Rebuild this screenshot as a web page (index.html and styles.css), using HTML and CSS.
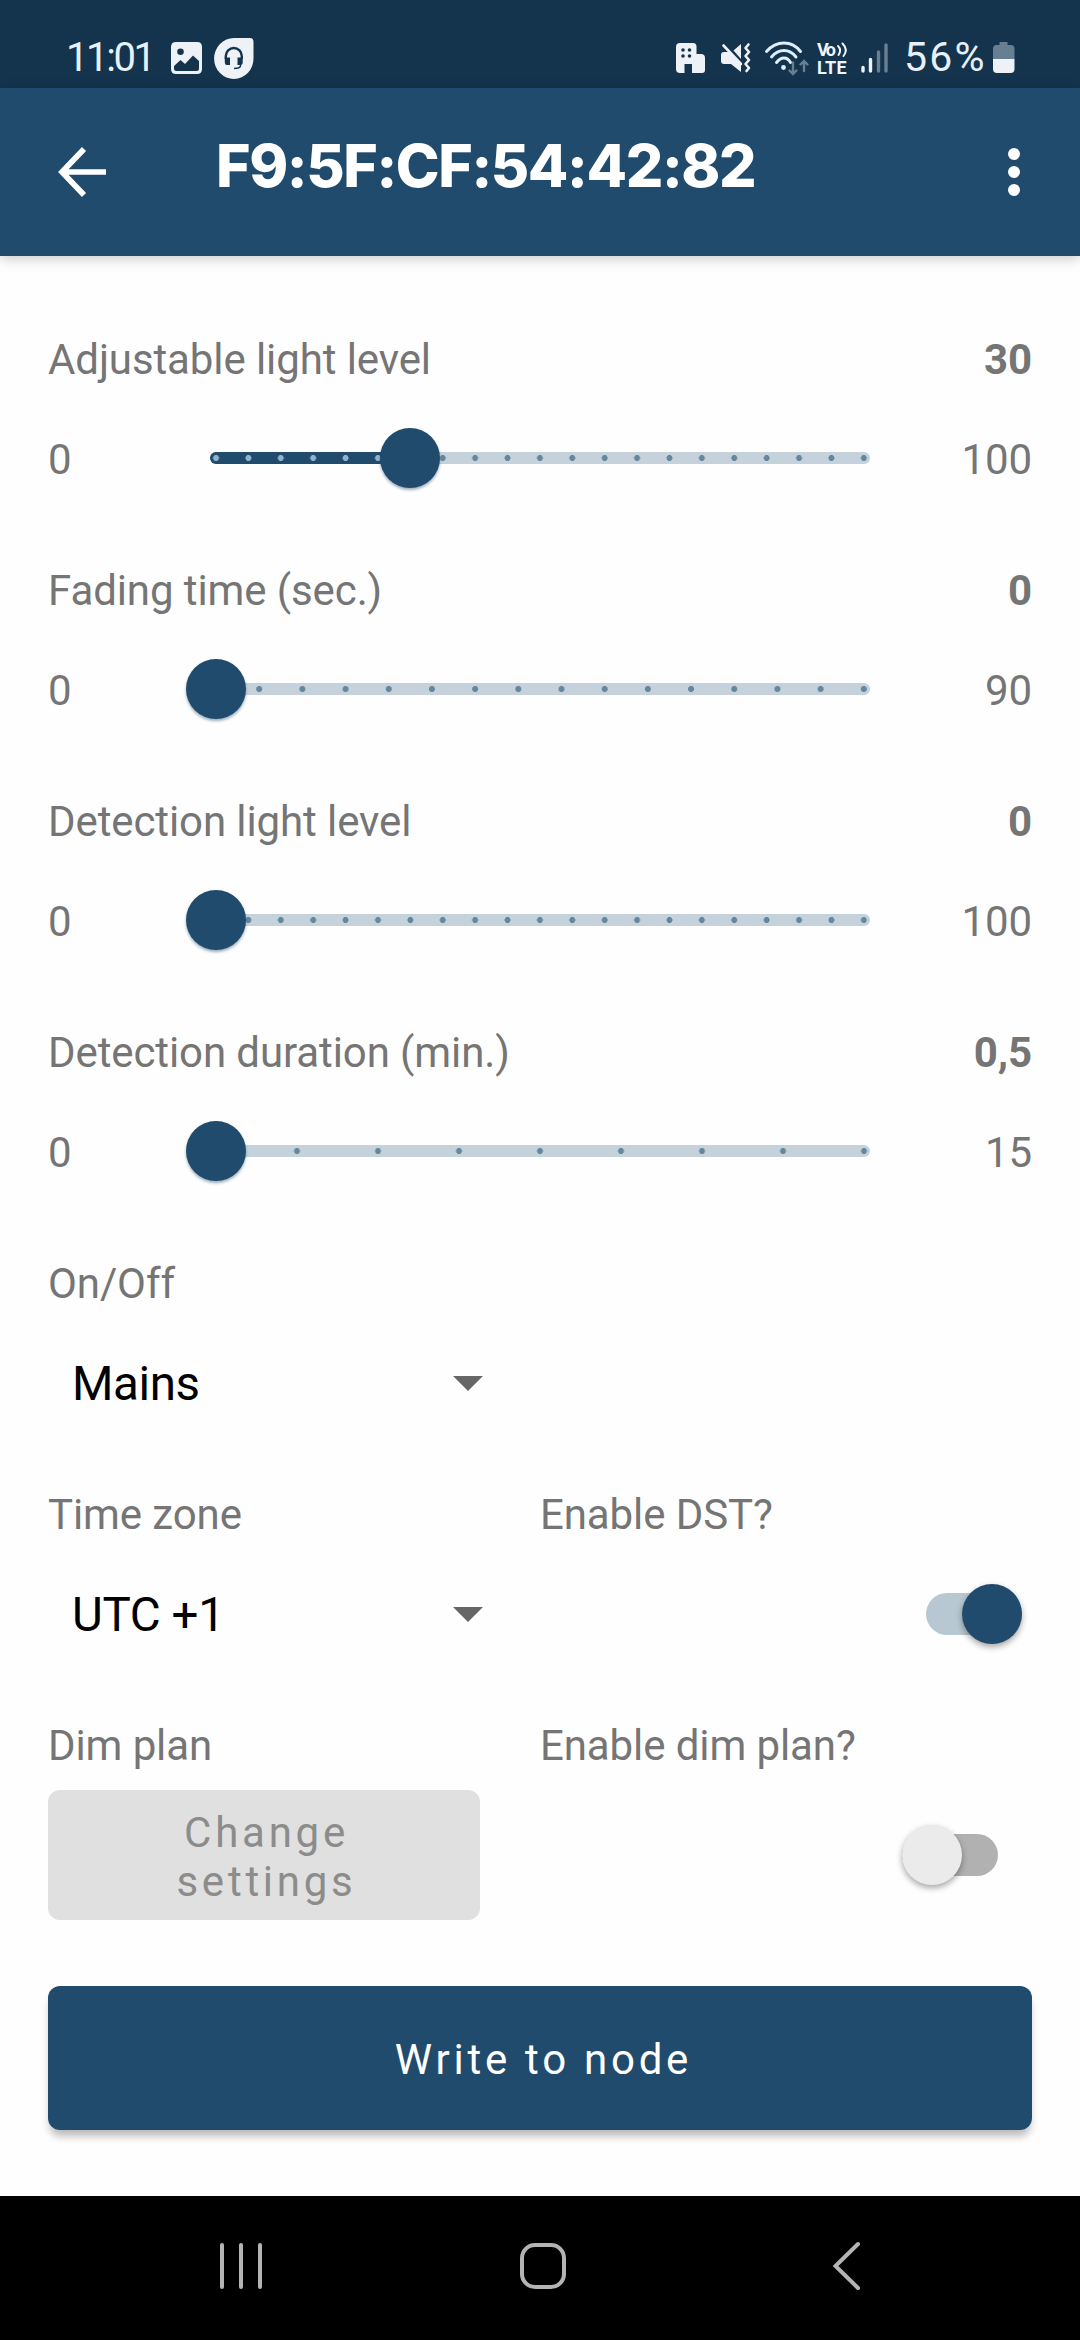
FILE: index.html
```html
<!DOCTYPE html>
<html lang="en">
<head>
  <meta charset="UTF-8" />
  <title>Node settings</title>
  <link rel="stylesheet" href="styles.css">
</head>
<body>

<div class="status-bar">
  <span class="clock">11:01</span>
  <svg class="icon-picture" width="31" height="32" viewBox="0 0 31 32">
    <path fill="#eef2f6" fill-rule="evenodd" d="M5 0H26Q31 0 31 5V27Q31 32 26 32H5Q0 32 0 27V5Q0 0 5 0ZM9.500 6.500A3.300 3.300 0 1 0 9.500 13.100A3.300 3.300 0 1 0 9.500 6.500ZM3 24V26.500Q3 29 5.500 29H25.500Q28 29 28 26.500V19L22 13.500L14 22L9.500 18Z"/>
  </svg>
  <svg class="icon-headset" width="40" height="42" viewBox="0 0 40 42">
    <path fill="#eef2f6" d="M20 1H36Q39.500 1 39.500 5V21A19.700 20.500 0 1 1 20 1Z"/>
    <path fill="none" stroke="#14344d" stroke-width="2.400" d="M11.800 22V19A8 8 0 0 1 27.800 19V22"/>
    <path fill="#14344d" d="M10.800 20.500H16V28H13Q10.800 28 10.800 25.500ZM23.500 20.500H28.700V25.500Q28.700 28 26 28H23.500Z"/>
    <path fill="none" stroke="#14344d" stroke-width="1.400" d="M26.500 27V29Q26 31.500 20 31.500"/>
  </svg>

  <div class="status-right">
    <svg class="icon-building" width="30" height="32" viewBox="0 0 30 32">
      <path fill="#eef2f6" d="M4 1H17Q20.500 1 20.500 4.500V12H25Q29 12 29 16V28Q29 31 26 31H16V22H8.500V31H4Q0 31 0 27V5Q0 1 4 1Z"/>
      <g fill="#14344d">
        <circle cx="7" cy="8" r="1.800"/><circle cx="13.500" cy="8" r="1.800"/>
        <circle cx="7" cy="14" r="1.800"/><circle cx="13.500" cy="14" r="1.800"/>
      </g>
    </svg>
    <svg class="icon-mute" width="31" height="32" viewBox="0 0 31 32">
      <path fill="#eef2f6" d="M3 10H8L20 22V30L10 22H3Q0 22 0 19V13Q0 10 3 10ZM20 2V17L12.500 8.500Z"/>
      <path fill="none" stroke="#eef2f6" stroke-width="2.600" stroke-linecap="round" d="M2.500 3.500L20 22"/>
      <path fill="none" stroke="#eef2f6" stroke-width="2.600" stroke-linecap="round" stroke-linejoin="round" d="M27.500 2.500L24.500 6L28 10L24.500 14L28 18L24.500 22L28 26L25.500 29"/>
    </svg>
    <svg class="icon-wifi" width="44" height="36" viewBox="0 0 44 36">
      <g fill="none" stroke="#dfeefa" stroke-width="2.900" stroke-linecap="round">
        <path d="M1.500 11.500Q9 3 19 3T35.500 11.500"/>
        <path d="M6.500 17Q12 10.500 19 10.500T31 17"/>
        <path d="M11.500 22.500Q15 18 19 18T25.500 22.500"/>
      </g>
      <circle cx="18.500" cy="27.500" r="2.400" fill="#dfeefa"/>
      <path fill="none" stroke="#687f92" stroke-width="2.400" stroke-linecap="round" d="M28 22.500V34M24.500 30.500L28 34L31.500 30.500M39 31V21M35.500 24.500L39 21L42.500 24.500"/>
    </svg>
    <svg class="icon-volte" width="32" height="34" viewBox="0 0 32 34">
      <text class="volte" x="0" y="15" textLength="19">Vo</text>
      <text class="volte" x="0" y="32.500" textLength="29.500">LTE</text>
      <path fill="none" stroke="#eef6fc" stroke-width="2" stroke-linecap="round" d="M21 5Q25 9 21.500 14M25.500 2.500Q31.500 8.500 26.500 15"/>
    </svg>
    <svg class="icon-signal" width="28" height="32" viewBox="0 0 28 32">
      <g stroke-width="3.400" stroke-linecap="round">
        <path stroke="#eef2f6" d="M2 25.500V29M9.500 17.500V29"/>
        <path stroke="#687f92" d="M17.500 10V29M25 3V29"/>
      </g>
    </svg>
    <span class="battery-text">56%</span>
    <svg class="icon-battery" width="22" height="32" viewBox="0 0 22 32">
      <path fill="#687f92" d="M6.500 0H14.500V3H18Q21.500 3 21.500 7V17H0V7Q0 3 3.500 3H6.500Z"/>
      <path fill="#eef2f6" d="M0 17H21.500V27Q21.500 31 17.500 31H4Q0 31 0 27Z"/>
    </svg>
  </div>
</div>

<div class="app-bar">
  <svg class="icon-back" width="48" height="50" viewBox="0 0 48 50">
    <path fill="none" stroke="#fff" stroke-width="5.700" d="M48 25H4M26 2L4 25L26 48"/>
  </svg>
  <h1>F9:5F:CF:54:42:82</h1>
  <svg class="icon-more" width="12" height="48" viewBox="0 0 12 48">
    <g fill="#fff"><circle cx="6" cy="6" r="6"/><circle cx="6" cy="24" r="6"/><circle cx="6" cy="42" r="6"/></g>
  </svg>
</div>

<div class="content">
  <div class="setting">
    <div class="label-row"><span>Adjustable light level</span><strong>30</strong></div>
    <div class="slider-row">
      <span>0</span>
      <div class="slider" style="--step: 32.4px; --pos: 194.4px">
        <div class="fill"></div>
        <div class="thumb"></div>
      </div>
      <span class="max">100</span>
    </div>
  </div>

  <div class="setting">
    <div class="label-row"><span>Fading time (sec.)</span><strong>0</strong></div>
    <div class="slider-row">
      <span>0</span>
      <div class="slider" style="--step: 43.2px; --pos: 0px">
        <div class="thumb"></div>
      </div>
      <span class="max">90</span>
    </div>
  </div>

  <div class="setting">
    <div class="label-row"><span>Detection light level</span><strong>0</strong></div>
    <div class="slider-row">
      <span>0</span>
      <div class="slider" style="--step: 32.4px; --pos: 0px">
        <div class="thumb"></div>
      </div>
      <span class="max">100</span>
    </div>
  </div>

  <div class="setting">
    <div class="label-row"><span>Detection duration (min.)</span><strong>0,5</strong></div>
    <div class="slider-row">
      <span>0</span>
      <div class="slider" style="--step: 81px; --pos: 0px">
        <div class="thumb"></div>
      </div>
      <span class="max">15</span>
    </div>
  </div>

  <div class="setting columns">
    <div>
      <label>On/Off</label>
      <div class="spinner"><span>Mains</span><i class="caret"></i></div>
    </div>
  </div>

  <div class="setting columns">
    <div>
      <label>Time zone</label>
      <div class="spinner"><span>UTC +1</span><i class="caret"></i></div>
    </div>
    <div>
      <label>Enable DST?</label>
      <div class="switch-row"><div class="switch on"><div class="knob"></div></div></div>
    </div>
  </div>

  <div class="columns dim-plan">
    <div>
      <label>Dim plan</label>
      <button class="btn-change" disabled>Change<br>settings</button>
    </div>
    <div>
      <label>Enable dim plan?</label>
      <div class="switch-row"><div class="switch off"><div class="knob"></div></div></div>
    </div>
  </div>

  <button class="btn-write">Write to node</button>
</div>

<div class="nav-bar">
  <svg width="44" height="50" viewBox="0 0 44 50">
    <path stroke="#b4b4b4" stroke-width="4" stroke-linecap="round" d="M3 4V46M22 4V46M41 4V46"/>
  </svg>
  <svg class="icon-home" width="48" height="50" viewBox="0 0 48 50">
    <rect x="3" y="4" width="42" height="42" rx="13" fill="none" stroke="#b4b4b4" stroke-width="4"/>
  </svg>
  <svg width="30" height="50" viewBox="0 0 30 50">
    <path fill="none" stroke="#b4b4b4" stroke-width="4" stroke-linecap="round" d="M26 3L3.500 25L26 47"/>
  </svg>
</div>

</body>
</html>
```
FILE: styles.css
```css
* {
  box-sizing: border-box;
}

body {
  margin: 0;
  width: 1080px;
  height: 2340px;
  display: flex;
  flex-direction: column;
  background: #fefefe;
  font-family: Roboto, sans-serif;
  font-size: 42px;
  line-height: 49px;
  letter-spacing: -0.1px;
  color: #757575;
  overflow: hidden;
}

svg {
  display: block;
  flex: none;
  overflow: visible;
}

/* Status bar */
.status-bar {
  height: 88px;
  flex: none;
  padding: 27px 65px 0 66px;
  display: flex;
  align-items: center;
  background: #14344d;
  color: #e6f1fa;
}

.clock {
  width: 105px;
  font-size: 40px;
  letter-spacing: -2.400px;
}

.icon-headset {
  margin-left: 12px;
}

.status-right {
  margin-left: auto;
  display: flex;
  align-items: center;
}

.icon-mute {
  margin-left: 15px;
}

.icon-wifi {
  margin-left: 13px;
}

.icon-volte {
  margin-left: 8px;
}

.volte {
  font-size: 18px;
  font-weight: 700;
  letter-spacing: 0;
  fill: #eef6fc;
}

.icon-signal {
  margin-left: 12px;
}

.battery-text {
  width: 89px;
  margin-left: 15px;
  font-size: 41px;
  letter-spacing: 2.200px;
  white-space: nowrap;
}

/* App bar */
.app-bar {
  height: 168px;
  flex: none;
  padding: 0 60px 0 58px;
  display: flex;
  align-items: center;
  background: #204b6d;
  box-shadow: 0 3px 12px rgba(0, 0, 0, 0.2);
}

h1 {
  flex: 1;
  margin: 0 0 12px 110px;
  font-family: Inter, sans-serif;
  font-size: 59px;
  font-weight: 800;
  line-height: 72px;
  letter-spacing: -1.400px;
  color: #fff;
  white-space: nowrap;
}

/* Settings */
.content {
  flex: 1;
  padding: 79px 48px 0;
}

.setting {
  height: 231px;
}

.label-row {
  display: flex;
  justify-content: space-between;
}

.slider-row {
  height: 144px;
  margin-top: 3px;
  display: flex;
  align-items: center;
}

.slider-row span {
  width: 162px;
}

.slider-row .max {
  text-align: right;
}

.slider {
  --dot: #65879e;
  position: relative;
  width: 660px;
  height: 12px;
  margin-bottom: 2px;
  border-radius: 6px;
  background: radial-gradient(circle, var(--dot) 2.700px, transparent 3.300px) calc(6px - var(--step) / 2) 0 / var(--step) 12px #c5d2db;
}

.fill {
  --dot: #91b4cd;
  width: calc(6px + var(--pos));
  height: 12px;
  border-radius: 6px;
  background: radial-gradient(circle, var(--dot) 2.700px, transparent 3.300px) calc(6px - var(--step) / 2) 0 / var(--step) 12px #204b6d;
}

.thumb {
  position: absolute;
  top: -24px;
  left: calc(var(--pos) - 24px);
  width: 60px;
  height: 60px;
  border-radius: 50%;
  background: #204b6d;
  box-shadow: 0 2px 3px rgba(32, 75, 109, 0.45);
}

.columns {
  display: grid;
  grid-template-columns: 432px 492px;
  column-gap: 60px;
}

label {
  display: block;
}

.spinner {
  height: 144px;
  margin-top: 3px;
  padding: 1px 0 0 24px;
  display: flex;
  align-items: center;
  justify-content: space-between;
  font-size: 47.500px;
  line-height: 56px;
  letter-spacing: -0.4px;
  color: #000;
}

.caret {
  margin-right: -3px;
  border: 15px solid transparent;
  border-top-color: #666;
  border-bottom: 0;
}

.switch-row {
  height: 144px;
  margin-top: 3px;
  padding-right: 10px;
  display: flex;
  align-items: center;
  justify-content: flex-end;
}

.switch {
  width: 96px;
  height: 42px;
  border-radius: 21px;
  display: flex;
  align-items: center;
}

.switch.on {
  background: #b7c8d2;
  justify-content: flex-end;
}

.switch.off {
  background: #b1b1b1;
}

.knob {
  width: 60px;
  height: 60px;
  border-radius: 50%;
  background: #204b6d;
  box-shadow: 0 3px 6px rgba(0, 0, 0, 0.35);
}

.switch.off .knob {
  background: #ebebeb;
}

.dim-plan .switch-row {
  height: 130px;
  margin-top: 20px;
  padding-right: 34px;
}

button {
  display: block;
  border: none;
  border-radius: 12px;
  font: inherit;
  letter-spacing: 3.750px;
}

.btn-change {
  width: 432px;
  height: 130px;
  margin-top: 20px;
  padding: 3px 0 0 5px;
  background: #e0e0e0;
  color: #8c8c8c;
}

.btn-write {
  width: 984px;
  height: 144px;
  margin-top: 66px;
  padding: 2px 0 0 7px;
  background: #204b6d;
  color: #fff;
  box-shadow: 0 8px 9px -2px rgba(0, 0, 0, 0.28);
}

/* Android navigation */
.nav-bar {
  height: 144px;
  flex: none;
  padding: 0 218px 4px 219px;
  display: flex;
  align-items: center;
  justify-content: space-between;
  background: #000;
}

.icon-home {
  margin-right: 9px;
}
```
